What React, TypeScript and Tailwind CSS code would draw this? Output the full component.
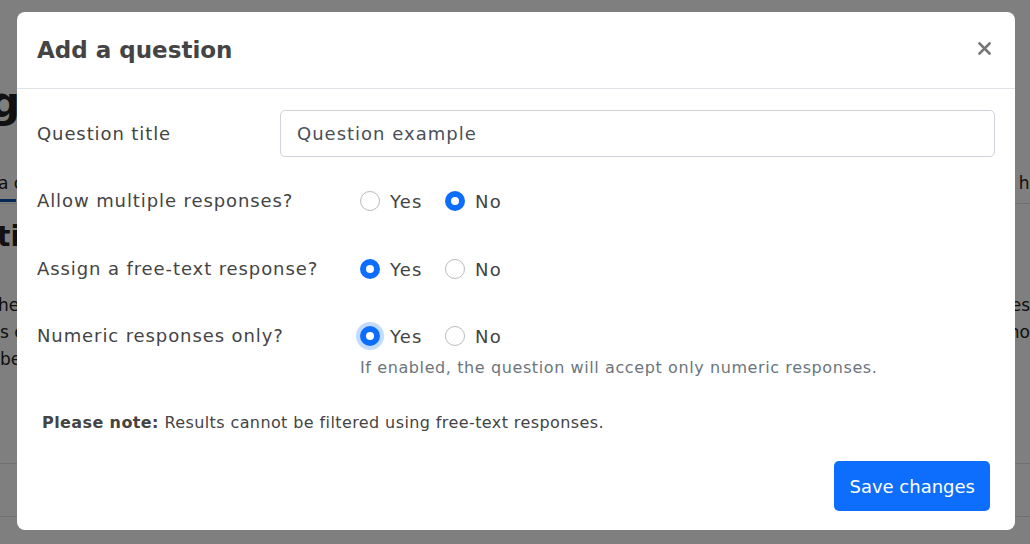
import React from "react";

const font = { fontFamily: "'DejaVu Sans', 'Noto Sans', sans-serif" };

function Radio({ checked, focused }: { checked?: boolean; focused?: boolean }) {
  if (checked) {
    return (
      <span
        className={
          "flex h-5 w-5 shrink-0 items-center justify-center rounded-full bg-[#0d6efd] " +
          (focused ? "ring-4 ring-[#0d6efd]/25" : "")
        }
      >
        <span className="h-2 w-2 rounded-full bg-white" />
      </span>
    );
  }
  return <span className="block h-5 w-5 shrink-0 rounded-full border border-[#b8bcc0] bg-white" />;
}

function RadioRow({
  label,
  yes,
  focused,
  help,
}: {
  label: string;
  yes: boolean;
  focused?: boolean;
  help?: string;
}) {
  return (
    <div className="flex">
      <div className="w-[323px] shrink-0 text-[18px] leading-[28px] tracking-[0.9px] text-[#444]">{label}</div>
      <div className="flex flex-col">
        <div className="flex h-7 items-center text-[18px] tracking-[1.2px] text-[#444]">
          <Radio checked={yes} focused={focused} />
          <span className="ml-[10px] w-[55px]">Yes</span>
          <Radio checked={!yes} />
          <span className="ml-[10px]">No</span>
        </div>
        {help && (
          <div className="mt-[6px] text-[16px] leading-6 tracking-[0.6px] text-[#6c757d]">{help}</div>
        )}
      </div>
    </div>
  );
}

function Backdrop() {
  return (
    <div className="flex h-[544px] w-full flex-col overflow-hidden bg-white text-[#222]">
      <div className="h-[77px]" />
      <div className="flex h-[50px] items-center text-[42px] font-semibold">
        <span className="-ml-[10px]">g</span>
      </div>
      <div className="h-[42px]" />
      <div className="flex h-[30px] items-center justify-between text-[17px] font-medium">
        <span className="-ml-[2px]">a c</span>
        <span className="-mr-[10px]">he</span>
      </div>
      <div className="flex h-[5px] border-b border-[#dee2e6]">
        <div className="h-[3px] w-[16px] bg-[#0b4fa8]" />
      </div>
      <div className="h-[8px]" />
      <div className="flex h-[50px] items-center text-[28px] font-bold">
        <span className="-ml-[3px]">ti</span>
      </div>
      <div className="h-[30px]" />
      <div className="flex flex-col text-[17px] leading-[27px]">
        <div className="flex justify-between">
          <span className="-ml-[2px]">her</span>
          <span>es</span>
        </div>
        <div className="flex justify-between">
          <span>s c</span>
          <span>ho</span>
        </div>
        <div className="flex justify-between">
          <span>be</span>
          <span />
        </div>
      </div>
      <div className="h-[90px]" />
      <div className="border-b border-[#dee2e6]" />
      <div className="h-[52px]" />
      <div className="border-b border-[#dee2e6]" />
    </div>
  );
}

export default function App() {
  return (
    <div className="relative h-[544px] w-[1030px] overflow-hidden" style={font}>
      <Backdrop />
      <div className="absolute inset-0 bg-black/50" />
      <div className="absolute left-[17px] top-[12px] flex w-[998px] flex-col rounded-lg bg-white">
        <div className="flex h-[77px] items-center justify-between border-b border-[#dee2e6] pl-[20px] pr-[24px]">
          <h2 className="text-[23px] font-bold text-[#444]">Add a question</h2>
          <svg width="13" height="13" viewBox="0 0 13 13" className="mt-[-4px]">
            <path d="M1.5 1.5 L11.5 11.5 M11.5 1.5 L1.5 11.5" stroke="#777" strokeWidth="2.6" strokeLinecap="square" />
          </svg>
        </div>
        <div className="flex flex-col px-[20px] pt-[21px] pb-[19px]">
          <div className="flex items-center">
            <div className="w-[243px] shrink-0 text-[18px] leading-[28px] tracking-[0.9px] text-[#444]">
              Question title
            </div>
            <div className="flex h-[47px] flex-1 items-center rounded-[5px] border border-[#ced4da] px-[16px] text-[18px] tracking-[1px] text-[#495057]">
              Question example
            </div>
          </div>
          <div className="mt-[30px] flex flex-col gap-[40px]">
            <RadioRow label="Allow multiple responses?" yes={false} />
            <RadioRow label="Assign a free-text response?" yes={true} />
          </div>
          <div className="mt-[39px]">
            <RadioRow
              label="Numeric responses only?"
              yes={true}
              focused
              help="If enabled, the question will accept only numeric responses."
            />
          </div>
          <div className="mt-[31px] pl-[5px] text-[16px] leading-6 tracking-[0.4px] text-[#444]">
            <span className="font-bold">Please note:</span> Results cannot be filtered using free-text responses.
          </div>
          <div className="mt-[26px] flex justify-end pr-[5px]">
            <button className="h-[50px] rounded-[5px] bg-[#0d6efd] px-[15px] text-[18px] font-medium text-white">
              Save changes
            </button>
          </div>
        </div>
      </div>
    </div>
  );
}
